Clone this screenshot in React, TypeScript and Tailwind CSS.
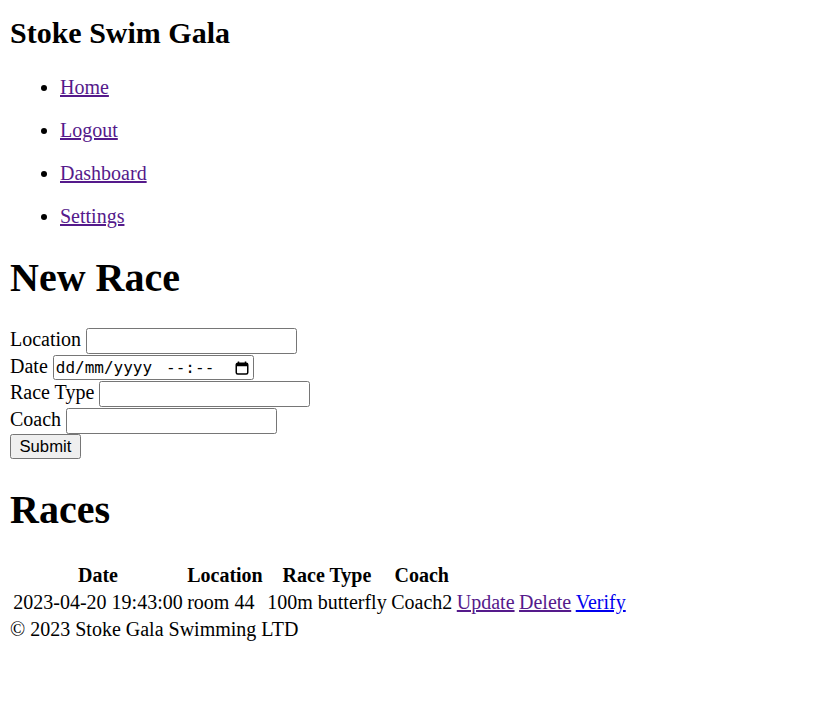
import React from "react";

const serif = { fontFamily: '"Liberation Serif", "Times New Roman", serif' };

function TextInput() {
  return (
    <input
      type="text"
      className="w-[211px] h-[26px] border border-[#767676] rounded-[2.5px] bg-white px-[2.5px] outline-none"
      style={{ fontFamily: '"Liberation Sans", Arial, sans-serif' }}
    />
  );
}

function DateInput() {
  return (
    <div className="w-[201px] h-[25.5px] border border-[#767676] rounded-[2.5px] bg-white flex items-center pl-[2px] pr-[4px] font-['DejaVu_Sans_Mono',monospace] text-[16px] leading-[19px] text-black">
      <span>dd/mm/yyyy</span>
      <span className="ml-[14px]">--:--</span>
      <span className="ml-auto flex items-center">
        <svg width="14" height="14" viewBox="0 0 14 14">
          <path d="M3.5 0.5v2.5M10.5 0.5v2.5" stroke="black" strokeWidth="1.5" />
          <rect x="1.25" y="2.25" width="11.5" height="10.75" rx="1.5" fill="none" stroke="black" strokeWidth="1.5" />
          <rect x="1.25" y="2.25" width="11.5" height="3" fill="black" />
        </svg>
      </span>
    </div>
  );
}

export default function App() {
  const visited = "text-[#551a8b] underline";
  return (
    <div className="min-h-[722px] bg-white text-black px-[10px] pt-[16px] flex flex-col text-[20px] leading-[23px]" style={serif}>
      <h2 className="text-[30px] leading-[34.5px] font-bold">Stoke Swim Gala</h2>
      <ul className="mt-[25px] list-disc pl-[50px] flex flex-col gap-[20px]">
        <li><a href="#" className={visited}>Home</a></li>
        <li><a href="#" className={visited}>Logout</a></li>
        <li><a href="#" className={visited}>Dashboard</a></li>
        <li><a href="#" className={visited}>Settings</a></li>
      </ul>
      <h1 className="mt-[27.7px] text-[40px] leading-[46px] font-bold">New Race</h1>
      <form className="mt-[27.1px] flex flex-col items-start" onSubmit={(e) => e.preventDefault()}>
        <div className="h-[26.5px] flex items-start gap-[5px]">
          <label>Location</label>
          <TextInput />
        </div>
        <div className="h-[26.5px] flex items-start gap-[5px]">
          <label>Date</label>
          <DateInput />
        </div>
        <div className="h-[26.5px] flex items-start gap-[5px]">
          <label>Race Type</label>
          <TextInput />
        </div>
        <div className="h-[26.5px] flex items-start gap-[5px]">
          <label>Coach</label>
          <TextInput />
        </div>
        <button
          type="submit"
          className="h-[25px] px-[8.5px] border border-[#767676] rounded-[2.5px] bg-[#efefef] text-[16.67px] leading-[19px] text-black"
          style={{ fontFamily: '"Liberation Sans", Arial, sans-serif' }}
        >
          Submit
        </button>
      </form>
      <h1 className="mt-[28px] text-[40px] leading-[46px] font-bold">Races</h1>
      <table className="mt-[27.4px] self-start border-separate border-spacing-[2.5px]">
        <thead>
          <tr>
            <th className="p-[1.25px] text-center font-bold">Date</th>
            <th className="p-[1.25px] text-center font-bold">Location</th>
            <th className="p-[1.25px] text-center font-bold">Race Type</th>
            <th className="p-[1.25px] text-center font-bold">Coach</th>
          </tr>
        </thead>
        <tbody>
          <tr>
            <td className="p-[1.25px] text-left">2023-04-20 19:43:00</td>
            <td className="p-[1.25px] text-left">room 44</td>
            <td className="p-[1.25px] text-left">100m butterfly</td>
            <td className="p-[1.25px] text-left">Coach2</td>
            <td className="p-[1.25px] text-left"><a href="#" className={visited}>Update</a></td>
            <td className="p-[1.25px] text-left"><a href="#" className={visited}>Delete</a></td>
            <td className="p-[1.25px] text-left"><a href="#" className="text-[#0000ee] underline">Verify</a></td>
          </tr>
        </tbody>
      </table>
      <footer>© 2023 Stoke Gala Swimming LTD</footer>
    </div>
  );
}
